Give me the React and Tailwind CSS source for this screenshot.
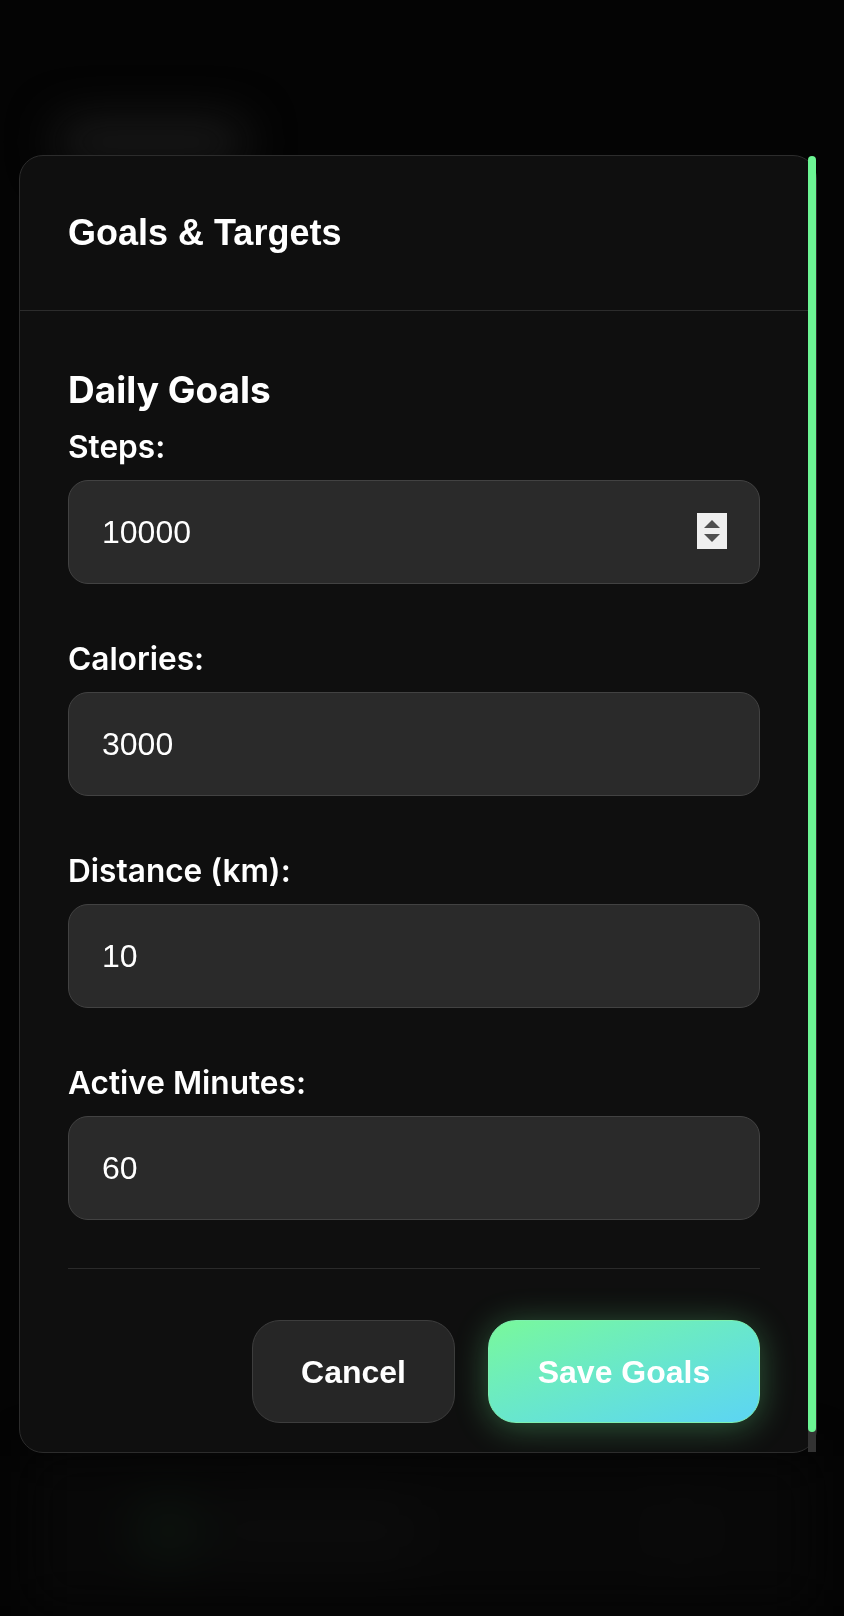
import { useState } from "react";

const goals = [
  { id: "steps", label: "Steps:", value: "10000", spin: true },
  { id: "calories", label: "Calories:", value: "3000" },
  { id: "distance", label: "Distance (km):", value: "10" },
  { id: "active", label: "Active Minutes:", value: "60" },
];

function SpinButton() {
  return (
    <div className="absolute right-[33px] top-[33px] w-[30px] h-[36px] bg-[#efefef] flex flex-col items-center justify-center gap-[6px] pointer-events-none">
      <svg width="16" height="8" viewBox="0 0 16 8">
        <path d="M8 0L16 8H0z" fill="#505050" />
      </svg>
      <svg width="16" height="8" viewBox="0 0 16 8">
        <path d="M0 0H16L8 8z" fill="#505050" />
      </svg>
    </div>
  );
}

export default function App() {
  const [values, setValues] = useState(
    Object.fromEntries(goals.map((g) => [g.id, g.value]))
  );

  return (
    <div className="relative min-h-[1616px] w-full bg-[#040404] overflow-hidden font-['Liberation_Sans',Arial,sans-serif]">
      {/* blurred page behind the modal */}
      <div className="flex flex-col h-[1616px] blur-xl">
        <div className="pt-[122px] pl-[56px]">
          <div className="w-[190px] h-[40px] rounded-full bg-[#1c1c1c]" />
        </div>
        <div className="flex-1" />
        <div className="h-[150px] mx-[32px] mb-[10px] flex items-center justify-between px-[100px] bg-[#080808]">
          <div className="w-[70px] h-[70px] rounded-full bg-[#0c130e]" />
          <div className="w-[220px] h-[70px] rounded-full bg-[#0b0b0b]" />
          <div className="flex-1" />
          <div className="w-[60px] h-[70px] rounded-full bg-[#0a0a0a]" />
        </div>
      </div>

      {/* modal */}
      <div className="fixed inset-0 pl-[19px] pt-[155px]">
        <div className="relative w-[798px] h-[1298px] pr-[8px] rounded-[24px] border border-[#2c2c2c] bg-[#0f0f0f]">
          <div className="h-full overflow-hidden rounded-l-[23px]">
            <div className="px-[48px] py-[56px] border-b border-[#2c2c2c]">
              <h2 className="text-[36px] leading-[42px] font-bold text-white">Goals &amp; Targets</h2>
            </div>

            <div className="px-[48px] pt-[57px] pb-[50px]">
              <h3 className="font-['Inter',sans-serif] text-[37px] leading-[44px] font-bold text-white">Daily Goals</h3>

              <div className="mt-[17px] flex flex-col gap-[57px]">
                {goals.map((g) => (
                  <div key={g.id} className="flex flex-col">
                    <label
                      htmlFor={g.id}
                      className="font-['Inter',sans-serif] text-[31.6px] leading-[36px] font-semibold text-white mb-[15px]"
                    >
                      {g.label}
                    </label>
                    <div className="relative">
                      <input
                        id={g.id}
                        type="text"
                        inputMode="numeric"
                        value={values[g.id]}
                        onChange={(e) => setValues({ ...values, [g.id]: e.target.value })}
                        className="w-full h-[104px] px-[33px] rounded-[20px] bg-[#2a2a2a] border border-[#424242] text-white text-[32px] font-['Liberation_Sans',Arial,sans-serif] outline-none"
                      />
                      {g.spin && <SpinButton />}
                    </div>
                  </div>
                ))}
              </div>

              <div className="mt-[48px] pt-[51px] border-t border-[#2a2a2a] flex justify-end gap-[33px]">
                <button className="h-[103px] w-[203px] rounded-[28px] bg-[#262626] border border-[#3d3d3d] text-white text-[32px] font-bold">
                  Cancel
                </button>
                <button className="h-[103px] w-[272px] rounded-[28px] bg-gradient-to-br from-[#79f89a] to-[#5cd4f4] border border-[#7ef0b0] text-white text-[32px] font-bold shadow-[0_4px_34px_rgba(108,245,148,0.33)]">
                  Save Goals
                </button>
              </div>
            </div>
          </div>

          {/* scrollbar */}
          <div className="absolute top-0 bottom-0 right-0 w-[8px] flex flex-col">
            <div className="relative z-10 h-[1276px] rounded-full bg-[#6cf594]" />
            <div className="flex-1 -mt-[8px] bg-[#333333]" />
          </div>
        </div>
      </div>
    </div>
  );
}
